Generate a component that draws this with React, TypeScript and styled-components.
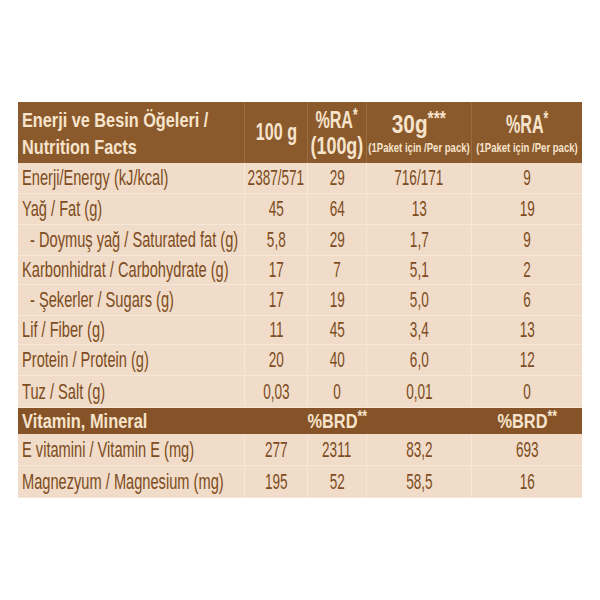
import React from "react";
import styled, { createGlobalStyle } from "styled-components";

const GlobalStyle = createGlobalStyle`
  html, body { margin: 0; padding: 0; background: #ffffff; }
  body { font-family: "Liberation Sans", Arial, sans-serif; }
`;

const BROWN = "#8b5a2c";
const BROWN_DARK = "#865328";
const CREAM = "#f7e4cc";
const BODY_BG = "#f0dcc8";
const LINE = "#f6e7d9";
const TEXT = "#7d4c22";

const Page = styled.div`
  padding: 102px 0 0 18px;
`;

const Table = styled.div`
  display: grid;
  grid-template-columns: 227px 63px 59px 105px 110px;
  width: 564px;
  background: ${BODY_BG};
`;

const HeadCell = styled.div<{ $last?: boolean; $left?: boolean }>`
  height: 61px;
  box-sizing: border-box;
  background: ${BROWN};
  color: ${CREAM};
  font-weight: 700;
  display: flex;
  flex-direction: column;
  justify-content: center;
  align-items: ${(p) => (p.$left ? "flex-start" : "center")};
  padding-left: ${(p) => (p.$left ? "4px" : "0")};
  border-right: ${(p) => (p.$last ? "none" : "1px solid rgba(255,235,210,0.13)")};
`;

const Cell = styled.div<{ $h: number; $left?: boolean; $indent?: boolean; $last?: boolean }>`
  height: ${(p) => p.$h}px;
  box-sizing: border-box;
  display: flex;
  align-items: center;
  justify-content: ${(p) => (p.$left ? "flex-start" : "center")};
  padding-left: ${(p) => (p.$indent ? "12px" : p.$left ? "4px" : "0")};
  border-bottom: 1px solid ${LINE};
  border-right: ${(p) => (p.$last ? "none" : `1px solid ${LINE}`)};
  color: ${TEXT};
  font-size: 22px;
`;

const BandCell = styled.div<{ $left?: boolean }>`
  height: 26px;
  background: ${BROWN_DARK};
  color: ${CREAM};
  font-weight: 700;
  font-size: 21px;
  display: flex;
  align-items: center;
  justify-content: ${(p) => (p.$left ? "flex-start" : "center")};
  padding-left: ${(p) => (p.$left ? "4px" : "0")};
`;

const Cond = styled.span<{ $s?: number; $origin?: string; $size?: number; $lh?: number }>`
  display: inline-block;
  white-space: nowrap;
  transform: scaleX(${(p) => p.$s ?? 0.616});
  transform-origin: ${(p) => p.$origin ?? "center"} center;
  ${(p) => (p.$size ? `font-size: ${p.$size}px;` : "")}
  ${(p) => (p.$lh ? `line-height: ${p.$lh}px;` : "")}
`;

const Star = styled.span`
  font-size: 0.75em;
  vertical-align: 0.4em;
  line-height: 0;
`;

const rows = [
  { label: "Enerji/Energy (kJ/kcal)", v: ["2387/571", "29", "716/171", "9"], h: 31 },
  { label: "Yağ / Fat (g)", v: ["45", "64", "13", "19"], h: 31 },
  { label: "- Doymuş yağ / Saturated fat (g)", v: ["5,8", "29", "1,7", "9"], indent: true, h: 31 },
  { label: "Karbonhidrat / Carbohydrate (g)", v: ["17", "7", "5,1", "2"], h: 29 },
  { label: "- Şekerler / Sugars (g)", v: ["17", "19", "5,0", "6"], indent: true, h: 31 },
  { label: "Lif / Fiber (g)", v: ["11", "45", "3,4", "13"], h: 29 },
  { label: "Protein / Protein (g)", v: ["20", "40", "6,0", "12"], h: 31 },
  { label: "Tuz / Salt (g)", v: ["0,03", "0", "0,01", "0"], h: 32 },
];

const vitRows = [
  { label: "E vitamini / Vitamin E (mg)", v: ["277", "2311", "83,2", "693"], h: 32 },
  { label: "Magnezyum / Magnesium (mg)", v: ["195", "52", "58,5", "16"], h: 32 },
];

type Row = { label: string; v: string[]; h: number; indent?: boolean };

const DataRow = ({ r }: { r: Row }) => (
  <>
    <Cell $h={r.h} $left $indent={r.indent}>
      <Cond $origin="left" $s={0.665}>{r.label}</Cond>
    </Cell>
    {r.v.map((x, i) => (
      <Cell key={i} $h={r.h} $last={i === 3}>
        <Cond>{x}</Cond>
      </Cell>
    ))}
  </>
);

export default function App() {
  return (
    <>
      <GlobalStyle />
      <Page>
        <Table>
          <HeadCell $left>
            <Cond $origin="left" $s={0.775} $size={21} $lh={27}>
              Enerji ve Besin Öğeleri /
            </Cond>
            <Cond $origin="left" $s={0.775} $size={21} $lh={27}>
              Nutrition Facts
            </Cond>
          </HeadCell>
          <HeadCell>
            <Cond $s={0.7} $size={23} $lh={27}>100 g</Cond>
          </HeadCell>
          <HeadCell>
            <Cond $s={0.67} $size={24} $lh={27}>
              %RA<Star>*</Star>
            </Cond>
            <Cond $s={0.78} $size={23} $lh={27}>(100g)</Cond>
          </HeadCell>
          <HeadCell>
            <Cond $s={0.8} $size={26} $lh={30}>
              30g<Star>***</Star>
            </Cond>
            <Cond $s={0.735} $size={13} $lh={17}>(1Paket için /Per pack)</Cond>
          </HeadCell>
          <HeadCell $last>
            <Cond $s={0.62} $size={26} $lh={30}>
              %RA<Star>*</Star>
            </Cond>
            <Cond $s={0.735} $size={13} $lh={17}>(1Paket için /Per pack)</Cond>
          </HeadCell>

          {rows.map((r, i) => (
            <DataRow key={i} r={r} />
          ))}

          <BandCell $left>
            <Cond $origin="left" $s={0.78}>Vitamin, Mineral</Cond>
          </BandCell>
          <BandCell />
          <BandCell>
            <Cond $s={0.78}>
              %BRD<Star>**</Star>
            </Cond>
          </BandCell>
          <BandCell />
          <BandCell>
            <Cond $s={0.78}>
              %BRD<Star>**</Star>
            </Cond>
          </BandCell>

          {vitRows.map((r, i) => (
            <DataRow key={i} r={r} />
          ))}
        </Table>
      </Page>
    </>
  );
}
